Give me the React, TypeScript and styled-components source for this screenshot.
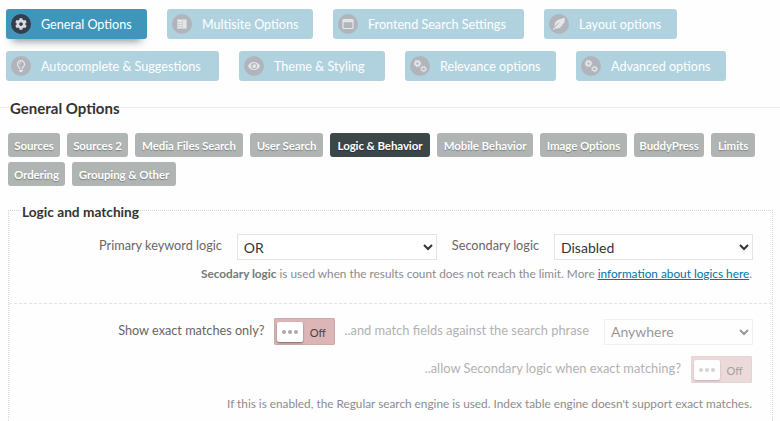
import React from "react";
import styled, { createGlobalStyle } from "styled-components";
import { FaCog, FaEye, FaFeatherAlt, FaRegLightbulb } from "react-icons/fa";

const Global = createGlobalStyle`
  html, body { margin: 0; padding: 0; background: #fefefe; }
  body { font-family: Lato, "Open Sans", sans-serif; width: 780px; height: 421px; overflow: hidden; }
  * { box-sizing: border-box; }
`;

const Page = styled.div`
  display: flex;
  flex-direction: column;
  padding-top: 9px;
`;
const MainTabs = styled.nav`
  display: flex;
  flex-wrap: wrap;
  gap: 12px 20px;
  padding: 0 6px;
`;
const MainTab = styled.a<{ $active?: boolean; $w: number }>`
  display: flex;
  align-items: center;
  gap: 10px;
  width: ${(p) => p.$w}px;
  height: 30px;
  padding-left: 5px;
  border-radius: 3px;
  color: #fff;
  font-size: 12.6px;
  white-space: nowrap;
  background: ${(p) => (p.$active ? "#3f96ba" : "#b0d2df")};
  box-shadow: ${(p) => (p.$active ? "0 8px 8px -6px rgba(40,50,60,.55)" : "none")};
`;
const TabIcon = styled.span<{ $active?: boolean }>`
  display: flex;
  align-items: center;
  justify-content: center;
  width: 20px;
  height: 20px;
  border-radius: 50%;
  font-size: 12px;
  color: ${(p) => (p.$active ? "#d8dce0" : "#e4e6e8")};
  background: ${(p) => (p.$active ? "#333e4e" : "#b1b5bb")};
`;
const Heading = styled.h2`
  display: flex;
  align-items: center;
  margin: 17px 0 0;
  height: 20px;
  font-size: 15px;
  font-weight: 700;
  color: #333;
  &::before { content: ""; width: 10px; height: 1px; background: #e9ebec; margin-top: -1px; }
  &::after { content: ""; flex: 1; height: 1px; background: #e9ebec; margin-top: -1px; }
`;
const SubTabs = styled.nav`
  display: flex;
  flex-wrap: wrap;
  gap: 5px 7px;
  padding: 0 8px;
  margin-top: 15px;
`;
const SubTab = styled.a<{ $active?: boolean; $w: number }>`
  display: flex;
  align-items: center;
  justify-content: center;
  width: ${(p) => p.$w}px;
  height: 24px;
  border-radius: 3px;
  color: #fff;
  font-size: 11.5px;
  font-weight: 700;
  letter-spacing: -0.1px;
  white-space: nowrap;
  text-shadow: 0 1px 1px rgba(0,0,0,.3);
  background: ${(p) => (p.$active ? "#3b4649" : "#b0b5b4")};
`;
const Panel = styled.fieldset`
  margin: 15px 7px 0 8px;
  padding: 0;
  min-width: 0;
  border: 1px dotted #d4d4d4;
  border-bottom: 0;
`;
const Legend = styled.legend`
  margin-left: 12px;
  padding: 2px 1px 0;
  font-size: 13.7px;
  font-weight: 700;
  color: #333;
`;
const Section = styled.div<{ $sep?: boolean }>`
  display: flex;
  flex-direction: column;
  padding: ${(p) => (p.$sep ? "14px 19px 30px 0" : "14px 19px 0 0")};
  height: ${(p) => (p.$sep ? "auto" : "84px")};
  border-bottom: ${(p) => (p.$sep ? "0" : "1px dashed #e4e4e4")};
`;
const Row = styled.div<{ $mt?: number }>`
  display: flex;
  justify-content: flex-end;
  align-items: center;
  margin-top: ${(p) => p.$mt ?? 0}px;
  min-height: 26px;
`;
const Label = styled.label<{ $faded?: boolean; $gap?: number }>`
  font-size: ${(p) => (p.$faded ? "12.9px" : "12.7px")};
  color: #666;
  white-space: nowrap;
  margin-right: ${(p) => p.$gap ?? 15}px;
  margin-top: -4px;
  opacity: ${(p) => (p.$faded ? 0.5 : 1)};
`;
const Select = styled.select<{ $w: number; $faded?: boolean; $gap?: number }>`
  width: ${(p) => p.$w}px;
  height: 26px;
  margin-right: ${(p) => p.$gap ?? 0}px;
  padding: 0 2px;
  border: 1px solid #e4e4e4;
  border-radius: 0;
  background: #fff;
  font-family: inherit;
  font-size: 14px;
  color: #333;
  opacity: ${(p) => (p.$faded ? 0.5 : 1)};
`;
const Note = styled.p<{ $mt: number }>`
  margin: ${(p) => p.$mt}px 1px 0 0;
  font-size: 11.8px;
  color: #8c8c8c;
  text-align: right;
  white-space: nowrap;
  a { color: #0073aa; text-decoration: underline; }
  b { color: #777; }
`;
const Toggle = styled.div<{ $faded?: boolean; $gap?: number }>`
  display: flex;
  align-items: center;
  width: 61px;
  height: 27px;
  padding: 3px;
  margin-right: ${(p) => p.$gap ?? 0}px;
  border-radius: 2px;
  background: #dcb6b7;
  box-shadow: inset 0 0 0 1px #cfa9ab;
  opacity: ${(p) => (p.$faded ? 0.5 : 1)};
`;
const Knob = styled.span`
  display: flex;
  align-items: center;
  justify-content: center;
  gap: 2px;
  width: 26px;
  height: 20px;
  border-radius: 2px;
  background: #fff;
  box-shadow: 0 1px 2px rgba(0,0,0,.45);
  i { width: 4px; height: 4px; border-radius: 50%; background: #a9a9a9; }
`;
const OffText = styled.span`
  flex: 1;
  text-align: center;
  font-size: 11px;
  color: #444;
  margin-top: 1px;
`;

const Gears = () => (
  <svg width="14" height="14" viewBox="0 0 14 14" fill="none" stroke="#e6e8ea">
    <circle cx="4.5" cy="4.5" r="2" strokeWidth="1.6" />
    <circle cx="4.5" cy="4.5" r="3.2" strokeWidth="1.2" strokeDasharray="1.2 1.3" />
    <circle cx="10.5" cy="10" r="1.9" strokeWidth="1.1" />
    <circle cx="10.5" cy="10" r="2.9" strokeWidth="1" strokeDasharray="1.1 1.2" />
  </svg>
);
const Paper = () => (
  <svg width="12" height="12" viewBox="0 0 12 12" fill="#e6e8ea">
    <path d="M1 1h10v10H1z" fillOpacity=".55" />
    <path d="M2 2h4v2H2zM2 5h4v1H2zM2 7h4v1H2zM2 9h4v1H2z" />
    <path d="M7 2h3v8H7z" fillOpacity=".9" />
  </svg>
);
const Win = () => (
  <svg width="12" height="12" viewBox="0 0 12 12" fill="none" stroke="#e6e8ea">
    <rect x="1" y="1.5" width="10" height="9" rx="1" strokeWidth="1.2" />
    <path d="M1 3.2h10" strokeWidth="2" />
  </svg>
);

const mainTabs: [string, number, React.ReactNode][] = [
  ["General Options", 141, <FaCog />],
  ["Multisite Options", 146, <Paper />],
  ["Frontend Search Settings", 191, <Win />],
  ["Layout options", 133, <FaFeatherAlt />],
  ["Autocomplete & Suggestions", 213, <FaRegLightbulb />],
  ["Theme & Styling", 146, <FaEye />],
  ["Relevance options", 151, <Gears />],
  ["Advanced options", 150, <Gears />],
];
const subTabs: [string, number][] = [
  ["Sources", 52], ["Sources 2", 61], ["Media Files Search", 108], ["User Search", 73],
  ["Logic & Behavior", 100], ["Mobile Behavior", 96], ["Image Options", 87],
  ["BuddyPress", 70], ["Limits", 44], ["Ordering", 57], ["Grouping & Other", 104],
];

export default function App() {
  return (
    <Page>
      <Global />
      <MainTabs>
        {mainTabs.map(([t, w, icon], i) => (
          <MainTab key={t} $w={w} $active={i === 0}>
            <TabIcon $active={i === 0}>{icon}</TabIcon>
            {t}
          </MainTab>
        ))}
      </MainTabs>
      <Heading>General Options</Heading>
      <SubTabs>
        {subTabs.map(([t, w]) => (
          <SubTab key={t} $w={w} $active={t === "Logic & Behavior"}>{t}</SubTab>
        ))}
      </SubTabs>
      <Panel>
        <Legend>Logic and matching</Legend>
        <Section>
          <Row>
            <Label>Primary keyword logic</Label>
            <Select $w={200} $gap={15} defaultValue="OR"><option>OR</option><option>AND</option></Select>
            <Label>Secondary logic</Label>
            <Select $w={199} defaultValue="Disabled"><option>Disabled</option></Select>
          </Row>
          <Note $mt={6}>
            <b>Secodary logic</b> is used when the results count does not reach the limit. More{" "}
            <a href="#logic">information about logics here</a>.
          </Note>
        </Section>
        <Section $sep>
          <Row>
            <Label $gap={10}>Show exact matches only?</Label>
            <Toggle $gap={9}><Knob><i /><i /><i /></Knob><OffText>Off</OffText></Toggle>
            <Label $faded>..and match fields against the search phrase</Label>
            <Select $w={149} $faded defaultValue="Anywhere"><option>Anywhere</option></Select>
          </Row>
          <Row $mt={11}>
            <Label $faded $gap={10}>..allow Secondary logic when exact matching?</Label>
            <Toggle $faded $gap={1}><Knob><i /><i /><i /></Knob><OffText>Off</OffText></Toggle>
          </Row>
          <Note $mt={13}>If this is enabled, the Regular search engine is used. Index table engine doesn't support exact matches.</Note>
        </Section>
      </Panel>
    </Page>
  );
}
